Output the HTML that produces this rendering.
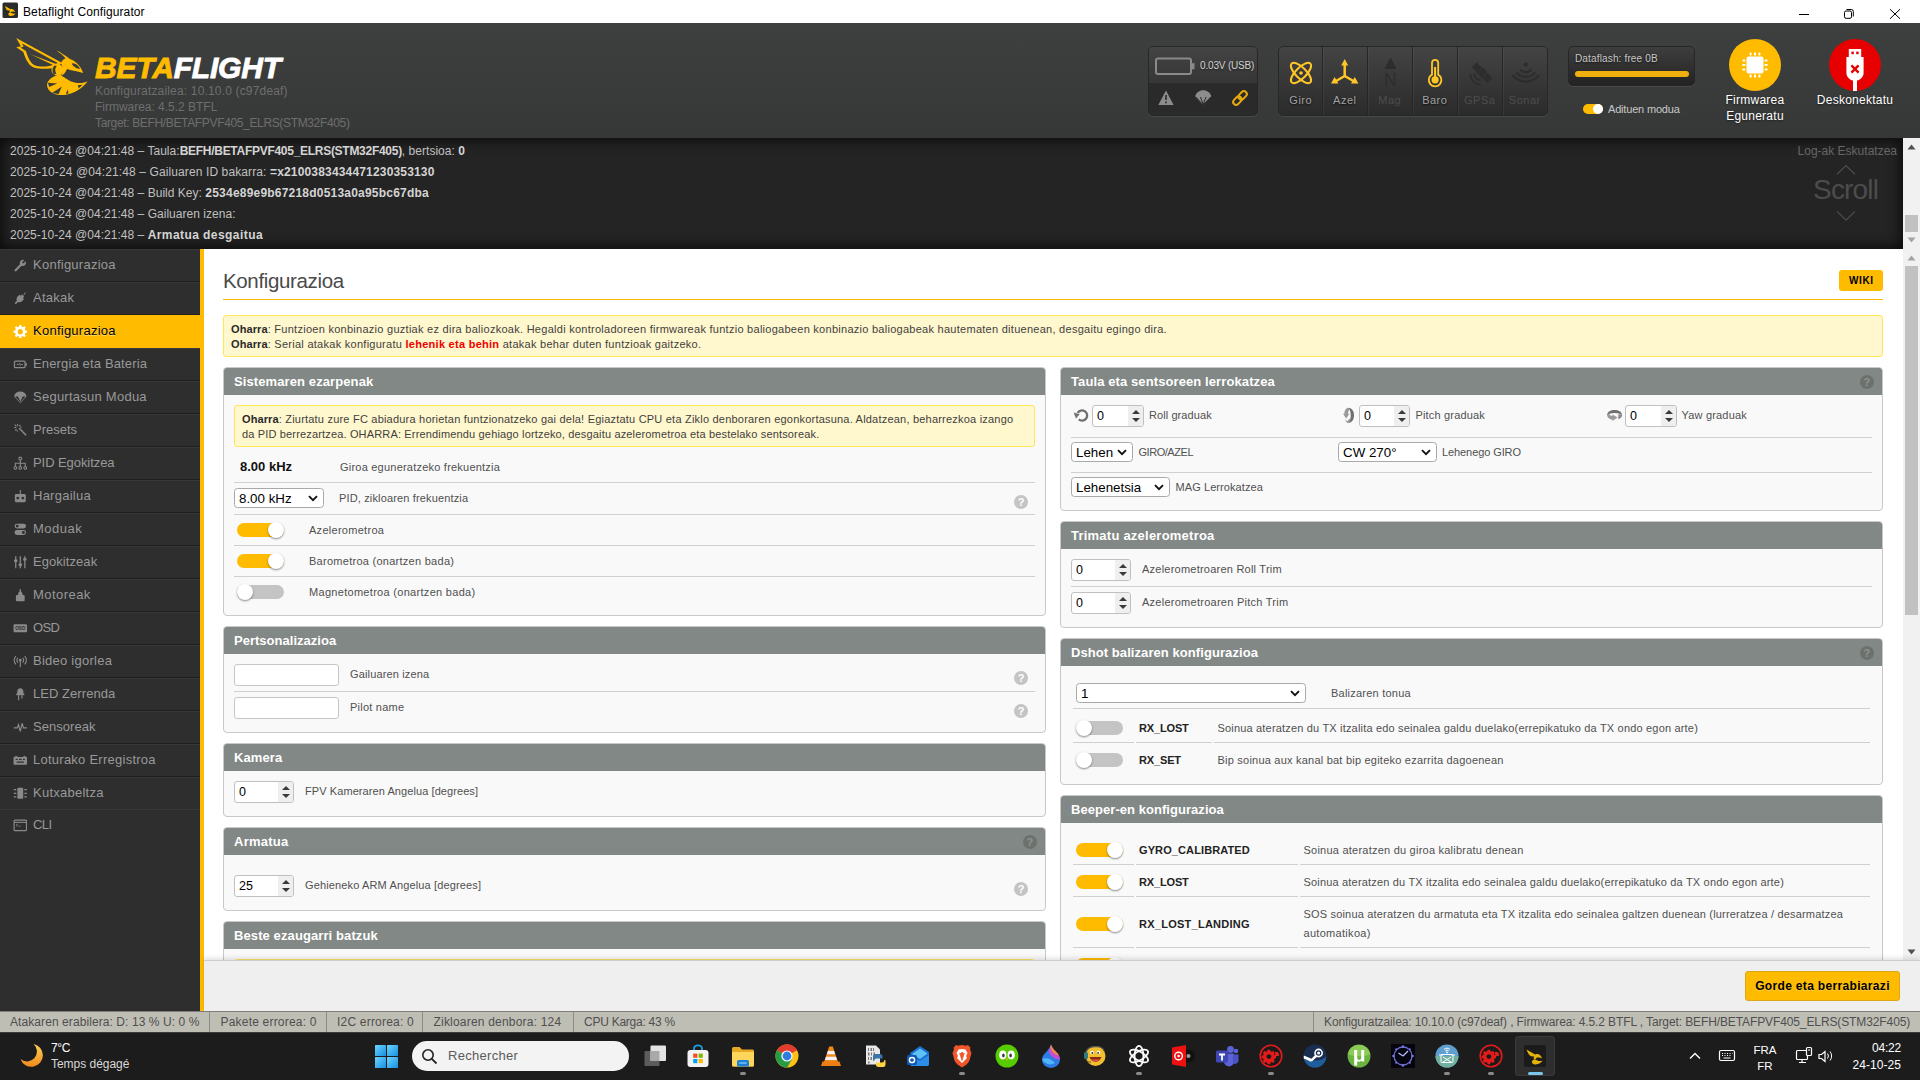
<!DOCTYPE html>
<html lang="eu">
<head>
<meta charset="utf-8">
<title>Betaflight Configurator</title>
<style>
*{box-sizing:border-box;margin:0;padding:0}
html,body{width:1920px;height:1080px;overflow:hidden;background:#fff}
body{font-family:"Liberation Sans",sans-serif;font-size:12px;color:#505050;position:relative}
.abs{position:absolute}
/* ---------- title bar ---------- */
#titlebar{left:0;top:0;width:1920px;height:23px;background:#fff}
#titlebar .ttl{left:23px;top:5px;font-size:12px;color:#000;line-height:15px;white-space:nowrap;letter-spacing:.1px}
/* ---------- header ---------- */
#header{left:0;top:23px;width:1920px;height:115px;background:linear-gradient(#3e403f,#363837);}
.ver{left:95px;color:#6e6e6e;font-size:12px;line-height:16px;white-space:nowrap;letter-spacing:.17px}
#logotext{left:95px;top:28px;font-size:30px;font-weight:bold;font-style:italic;line-height:34px;color:#fff;white-space:nowrap;letter-spacing:-.2px;transform-origin:0 50%}
#logotext{-webkit-text-stroke:.9px #fff;paint-order:stroke fill}
#logotext b{color:#ffbb00;-webkit-text-stroke:.9px #ffbb00}

/* header widgets */
.hbox{border-radius:5px;border:1px solid #272727;box-shadow:0 1px 0 rgba(255,255,255,.08)}
#bat{left:1148px;top:23px;width:110px;height:70px;background:#2a2a2a;overflow:hidden}
#bat .up{left:0;top:0;width:108px;height:36px;background:linear-gradient(#444,#363636)}
#bat .txt{left:51px;top:13px;font-size:10px;line-height:12px;color:#d0d0d0;white-space:nowrap;letter-spacing:-.17px;text-shadow:0 1px 2px rgba(0,0,0,.5)}
#sens{left:1278px;top:23px;width:270px;height:70px;background:linear-gradient(#444,#2b2b2b);overflow:hidden}
#sens .c{top:0;width:45px;height:68px}
#sens .c i{position:absolute;left:-1px;top:0;width:1px;height:68px;background:#262626;box-shadow:1px 0 0 rgba(255,255,255,.05)}
#sens .c span{position:absolute;left:-1px;width:45px;top:46px;text-align:center;font-size:11px;line-height:14px;color:#a3a3a3;text-shadow:0 1px 2px rgba(0,0,0,.8);letter-spacing:.5px;text-indent:.5px}
#sens .c.off span{color:#4d4d4d;text-shadow:none}
#sens svg{position:absolute;left:0;top:0}
#dflash{left:1568px;top:23px;width:127px;height:40px;background:linear-gradient(#3e3e3e,#232323)}
#dflash .t{left:6px;top:6px;font-size:10px;line-height:12px;color:#c8c8c8;white-space:nowrap;letter-spacing:.15px;text-shadow:0 1px 2px rgba(0,0,0,.6)}
#dflash .bar{left:6px;top:24px;width:114px;height:6px;border-radius:3px;background:#f0b10f}
#expert{left:1583px;top:81px;width:20px;height:10px;border-radius:5px;background:#ffbb00}
#expert i{position:absolute;right:0;top:0;width:10px;height:10px;border-radius:5px;background:#fff}
#expertl{left:1608px;top:79px;font-size:11px;line-height:14px;color:#c8c8c8;white-space:nowrap;letter-spacing:-.18px}
.circ{top:16px;width:52px;height:52px;border-radius:26px}
.clab{color:#fff;font-size:12px;line-height:16px;text-align:center;white-space:nowrap;letter-spacing:.25px;text-shadow:0 1px 2px rgba(0,0,0,.5)}
/* ---------- log ---------- */
#log{left:0;top:138px;width:1903px;height:111px;background:#242424;box-shadow:inset 0 0 14px 2px rgba(0,0,0,.75)}
#log .ln{left:10px;color:#c0c0c0;font-size:12px;line-height:21px;white-space:nowrap;letter-spacing:.03px}
#log .ln b{color:#d4d4d4;letter-spacing:.1px}
/* ---------- sidebar ---------- */
#side{left:0;top:249px;width:200px;height:762px;background:#2e2e2e}
#side .it{left:0;width:200px;height:33px;border-top:1px solid #383838;border-bottom:1px solid #1f1f1f;color:#999;font-size:13px;line-height:29px;padding-left:33px;white-space:nowrap;letter-spacing:.25px}
#side .it.act{background:#ffbb00;color:#000;border-color:#ffbb00;text-shadow:0 1px 0 rgba(255,255,255,.45)}
#side .it svg{position:absolute;left:12.8px;top:7.6px;width:14.6px;height:14.6px}
#side .it:last-child{border-bottom-color:#2e2e2e}
#ybar{left:200px;top:249px;width:4px;height:762px;background:#ffbb00}
/* ---------- content ---------- */
#content{left:204px;top:249px;width:1699px;height:711px;background:#fff;overflow:hidden}
#toolbar{left:204px;top:960px;width:1716px;height:51px;background:#efefef;border-top:1px solid #cdcdcd;box-shadow:0 -2px 5px rgba(0,0,0,.12)}
#status{left:0;top:1011px;width:1920px;height:21px;background:#bfbeb5;border-top:1px solid #7d7d79;color:#4f4f4f;font-size:12px;line-height:20px;white-space:nowrap}
#taskbar{left:0;top:1032px;width:1920px;height:48px;background:#1c1c1c}

/* content internals (page coordinates via #pg wrapper) */
#pg{left:-204px;top:-249px;width:1920px;height:1080px}
.t12{font-size:11px;line-height:16px;color:#505050;white-space:nowrap;letter-spacing:.08px}
.box{border:1px solid #c8c8c8;border-radius:4px;background:#f9f9f9;overflow:hidden}
.box .hd{left:0;top:-1px;right:0;height:28px;background:#828885;color:#fff;font-weight:bold;font-size:13px;line-height:29px;padding-left:10px;white-space:nowrap;letter-spacing:.1px}
.note{background:#fff7cd;border:1px solid #ffe55c;border-radius:3px;font-size:11px;line-height:15px;color:#3f3f3f;padding:6px 7px 4px;white-space:nowrap;letter-spacing:.27px}
.note b{color:#2a2a2a;letter-spacing:.1px}
.note .red{color:#f00000;font-weight:bold}
.sep{height:1px;background:#d0d0d0}
.help{width:14px;height:14px;border-radius:7px;background:#c4c4c4;color:#fff;font-size:11px;font-weight:bold;line-height:14px;text-align:center}
.hd .help{background:#6c716e;color:#8f9491;top:8px!important;line-height:14px}
.inp{background:#fff;border:1px solid #c6c6c6;border-radius:3px;height:22px}
.num{background:#fff;border:1px solid #c0c0c0;border-radius:3px;height:22px;font-size:12.5px;color:#000;line-height:20px;padding-left:4px;overflow:hidden}
.num i{position:absolute;right:0;top:0;width:15px;height:20px;background:#efefef}
.num i:before,.num i:after{content:"";position:absolute;left:3.5px;border:4px solid transparent}
.num i:before{border-bottom:4.5px solid #3a3a3a;border-top-width:0;top:4px}
.num i:after{top:12px;border-top:4.5px solid #3a3a3a;border-bottom-width:0}
.sel{background:#fff;border:1px solid #a9a9a9;border-radius:3.5px;height:20px;font-size:13.33px;color:#000;line-height:19px;padding-left:4px;white-space:nowrap;overflow:hidden}
.sel svg{position:absolute;right:5px;top:6px}
.tg{width:47px;height:16px}
.tg u{position:absolute;left:0;top:1px;width:47px;height:14px;border-radius:7px;background:#c4c4c4}
.tg.on u{background:#ffbb00}
.tg s{position:absolute;left:0;top:0;width:16px;height:16px;border-radius:8px;background:#fff;box-shadow:0 1px 2px rgba(0,0,0,.45)}
.tg.on s{left:31px}
.bl{font-size:11px;font-weight:bold;color:#222;line-height:16px;white-space:nowrap;letter-spacing:-.15px}
/* scrollbars */
.sbar{left:1903px;width:17px;background:#f1f1f1}
.thumb{left:2px;width:13px;background:#c1c1c1}
</style>
</head>
<body>
<div id="titlebar" class="abs">
<svg class="abs" style="left:2px;top:2px" width="17" height="17" viewBox="0 0 17 17"><rect x="0.5" y="0.5" width="15.5" height="15.5" rx="1.5" fill="#2b2b2b"/><path d="M3,4 L9,7.6 L6.5,8.6 C4.5,8.6 3.8,6.5 3,4Z M8.6,7.2 C10.5,6.3 12.6,8 13,10 C11.6,9.4 10.4,9.6 9.6,9.4 C9.2,10.4 8.4,10.8 7.8,11 L7.4,8.4Z M8,10.6 C6,11 5.6,13.4 8.2,13.9 C10.6,14.1 12.6,12.8 13.6,11.4 C12,12 10.2,11.6 8,10.6Z" fill="#ffbb00"/></svg>
<div class="abs ttl">Betaflight Configurator</div>
<svg class="abs" style="left:1790px;top:0" width="130" height="23" viewBox="1790 0 130 23" fill="none" stroke="#000" stroke-width="1"><path d="M1799,14.5H1809"/><rect x="1844.5" y="11" width="7" height="7.3" rx="1.5"/><path d="M1846.5,9.5H1851.3a2,2 0 0 1 2,2V16.5"/><path d="M1890,9.2L1900,18.8M1900,9.2L1890,18.8"/></svg>
</div>
<div id="header" class="abs">
<svg class="abs" style="left:10px;top:7px" width="90" height="70" viewBox="10 30 90 70">
<g fill="#ffbb00">
<path fill-rule="evenodd" d="M16.2,38.1 L61.8,62.7 L59.2,65.3 L51.5,68.2 C46.3,69.0 39.2,69.0 34.6,67.7 C29.4,66.0 26.2,61.1 23.3,52.0 L16.2,47.2 L20.9,46.3 Z M22.0,43.6 L57.8,63.0 C55.7,63.8 51.5,65.6 48.9,66.0 C43.7,66.8 38.5,66.7 35.3,65.5 C30.7,63.4 28.1,57.9 25.9,50.9 L20.4,47.6 L23.6,46.8 Z"/>
<path d="M30.5,54.2 L56.2,64.0 L54.6,65.8 Z"/>
<path d="M56.3,50.6 C60.5,52.0 64.4,55.3 67.3,57.7 L65.7,58.5 C62.5,55.3 59.9,52.7 56.3,50.6 Z M58.9,52.4 C62.5,53.7 66.4,55.9 69.3,58.5 L68.0,59.0 C65.1,56.2 62.5,54.3 58.9,52.4 Z"/>
<path d="M60.9,63.7 C61.8,59.8 65.7,56.9 69.0,58.4 C74.8,60.5 81.0,65.3 83.2,73.1 C78.7,71.1 72.2,71.1 67.0,69.0 C65.7,72.1 63.8,74.7 61.2,75.7 C63.8,72.1 63.1,66.3 60.9,63.7 Z"/>
<path d="M57.6,64.3 C61.2,64.3 63.5,66.9 63.5,69.8 C63.5,73.1 61.2,75.7 57.6,75.7 C54.7,75.7 51.5,73.4 51.5,69.8 C51.5,66.9 54.1,64.3 57.6,64.3 Z"/>
<path d="M60.5,74.8 C55.4,75.4 48.9,77.9 47.1,83.8 C46.3,89.6 51.5,94.1 59.2,95.0 C68.3,95.8 80.0,91.6 87.8,81.2 C82.6,83.8 74.8,83.8 68.3,79.9 C65.1,77.9 62.5,76.3 61.2,75.4 Z"/>
</g>
<g fill="#3b3d3c">
<path d="M54.7,65.5 C52.1,67.3 51.8,71.8 53.9,74.7 L56.3,73.5 C54.8,71.5 54.8,68.2 56.7,66.0 Z"/>
<path d="M47.9,82.8 L57.3,83.5 L49.2,87.0 Z M52.1,93.0 L61.8,86.4 L58.7,94.1 Z M65.9,94.1 L67.7,89.5 L68.4,93.5 Z M77.7,85.2 L82.6,84.8 L78.8,88.3 Z"/>
<path d="M71.9,63.7 C74.1,62.4 78.0,65.0 80.3,68.9 C77.4,68.9 73.2,66.9 71.9,63.7 Z"/>
</g>
</svg>
<div id="logotext" class="abs"><b>BETA</b>FLIGHT</div>
<div class="abs ver" style="top:60px">Konfiguratzailea: 10.10.0 (c97deaf)</div>
<div class="abs ver" style="top:76px;letter-spacing:-.02px">Firmwarea: 4.5.2 BTFL</div>
<div class="abs ver" style="top:92px;letter-spacing:-.35px">Target: BEFH/BETAFPVF405_ELRS(STM32F405)</div>
<div id="bat" class="abs hbox"><div class="abs up"></div>
<svg class="abs" style="left:0;top:0" width="108" height="68" viewBox="1149 47 108 68"><rect x="1156" y="58.5" width="35" height="15.5" rx="2" fill="none" stroke="#8a8a8a" stroke-width="2"/><rect x="1192" y="63" width="2.5" height="6.5" rx="1" fill="#8a8a8a"/>
<path d="M1166,90.6 L1173.6,105 H1158.3Z" fill="#8c8c8c"/><path d="M1166,95v5M1166,101.6v1.6" stroke="#2a2a2a" stroke-width="1.6"/>
<path d="M1195,96.5 C1196,92.5 1199.5,90.2 1203.2,90.2 C1207,90.2 1210.4,92.5 1211.4,96.5 L1203.2,105.3Z" fill="#8c8c8c"/><path d="M1195.5,96.6 L1203.2,105 L1211,96.6 M1200.5,97 L1203.2,104.5 L1206,97" fill="none" stroke="#2a2a2a" stroke-width="1"/>
<g fill="none" stroke="#e5ab0e" stroke-width="2" transform="translate(1240,98) rotate(-45)"><rect x="-8.4" y="-2.9" width="9.4" height="5.8" rx="2.9"/><rect x="-1" y="-2.9" width="9.4" height="5.8" rx="2.9"/></g>
</svg>
<div class="abs txt">0.03V (USB)</div></div>
<div id="sens" class="abs hbox">
<div class="abs c" style="left:0px"><svg width="45" height="68" viewBox="1279 47 45 68"><g fill="none" stroke="#ffc726" stroke-width="2"><ellipse cx="1301" cy="73" rx="13.3" ry="5.3" transform="rotate(45 1301 73)"/><ellipse cx="1301" cy="73" rx="13.3" ry="5.3" transform="rotate(-45 1301 73)"/></g><circle cx="1301" cy="73" r="1.8" fill="#ffc726"/></svg><span>Giro</span></div>
<div class="abs c" style="left:44px"><i></i><svg width="45" height="68" viewBox="1323 47 45 68"><g stroke="#ffc726" stroke-width="2.5" fill="none"><path d="M1344.7,76 V64 M1344.7,76 L1336,81 M1344.7,76 L1353.4,81"/></g><path d="M1344.7,59 L1348.2,65.5 H1341.2Z M1331,83.6 L1334.6,77 L1338.4,83.4Z M1358.4,83.6 L1354.8,77 L1351,83.4Z" fill="#ffc726"/></svg><span>Azel</span></div>
<div class="abs c off" style="left:89px"><i></i><svg width="45" height="68" viewBox="1368 47 45 68"><path d="M1390.5,57.2 L1396.6,69 H1384.4Z" fill="#2d2d2d"/><text x="1390.5" y="86.3" font-size="17.8" text-anchor="middle" fill="#2d2d2d" font-family="Liberation Sans,sans-serif">N</text></svg><span>Mag</span></div>
<div class="abs c" style="left:134px"><i></i><svg width="45" height="68" viewBox="1413 47 45 68"><path d="M1432,74.6 V63 a3.1,3.1 0 0 1 6.2,0 V74.6 a6.3,6.3 0 1 1 -6.2,0Z" fill="none" stroke="#ffc726" stroke-width="1.8"/><circle cx="1435.1" cy="79.8" r="3.6" fill="#ffc726"/><path d="M1435.1,78 V67" stroke="#ffc726" stroke-width="2"/></svg><span>Baro</span></div>
<div class="abs c off" style="left:179px"><i></i><svg width="45" height="68" viewBox="1458 47 45 68"><g fill="#2d2d2d"><rect x="-3.4" y="-11" width="6.8" height="7.2" transform="translate(1482,72.5) rotate(-45)"/><rect x="-3.4" y="4" width="6.8" height="7.2" transform="translate(1482,72.5) rotate(-45)"/><rect x="-4" y="-3.3" width="8" height="6.6" transform="translate(1482,72.5) rotate(-45)"/></g><g fill="none" stroke="#2d2d2d" stroke-width="2"><path d="M1474.3,73.5 a6,6 0 0 0 6.5,6.5"/><path d="M1470.5,74 a10,10 0 0 0 10.5,10.5"/></g></svg><span>GPSa</span></div>
<div class="abs c off" style="left:224px"><i></i><svg width="45" height="68" viewBox="1503 47 45 68"><circle cx="1525.8" cy="64.6" r="2.1" fill="#2d2d2d"/><g fill="none" stroke="#2d2d2d" stroke-width="2.2"><path d="M1520.3,69.5 a7,7 0 0 0 11,0"/><path d="M1516.3,72.3 a12,12 0 0 0 19,0"/><path d="M1512.6,75 a16.5,16.5 0 0 0 26.4,0"/></g></svg><span>Sonar</span></div>
</div>
<div id="dflash" class="abs hbox"><div class="abs t">Dataflash: free 0B</div><div class="abs bar"></div></div>
<div id="expert" class="abs"><i></i></div><div id="expertl" class="abs">Adituen modua</div>
<div class="abs circ" style="left:1729px;background:#ffbb00"><svg width="52" height="52" viewBox="-26 -26 52 52"><rect x="-8.5" y="-8.5" width="17" height="17" rx="2" fill="#fff"/><g fill="#fff"><rect x="-5.4" y="-12.6" width="2" height="3" rx=".6"/><rect x="-1" y="-12.6" width="2" height="3" rx=".6"/><rect x="3.4" y="-12.6" width="2" height="3" rx=".6"/><rect x="-5.4" y="9.6" width="2" height="3" rx=".6"/><rect x="-1" y="9.6" width="2" height="3" rx=".6"/><rect x="3.4" y="9.6" width="2" height="3" rx=".6"/><rect x="-12.6" y="-5.4" width="3" height="2" rx=".6"/><rect x="-12.6" y="-1" width="3" height="2" rx=".6"/><rect x="-12.6" y="3.4" width="3" height="2" rx=".6"/><rect x="9.6" y="-5.4" width="3" height="2" rx=".6"/><rect x="9.6" y="-1" width="3" height="2" rx=".6"/><rect x="9.6" y="3.4" width="3" height="2" rx=".6"/></g></svg></div>
<div class="abs clab" style="left:1705px;width:100px;top:69px">Firmwarea<br>Eguneratu</div>
<div class="abs circ" style="left:1829px;background:#e60000"><svg width="52" height="52" viewBox="-26 -26 52 52"><path d="M-6.2,-16 H6.2 V-8 H-6.2Z M-8.6,-8 H8.6 V8 C8.6,12 5,15 2,15.6 V26 H-2 V15.6 C-5,15 -8.6,12 -8.6,8Z" fill="#fff"/><rect x="-3.6" y="-13.4" width="2.4" height="2.6" fill="#e60000"/><rect x="1.2" y="-13.4" width="2.4" height="2.6" fill="#e60000"/><path d="M-3.6,0.4 L3.6,7.6 M3.6,0.4 L-3.6,7.6" stroke="#e60000" stroke-width="2.4"/></svg></div>
<div class="abs clab" style="left:1805px;width:100px;top:69px">Deskonektatu</div>

</div>
<div id="log" class="abs">
<div class="abs ln" style="top:3px">2025-10-24 @04:21:48 – Taula:<b style="letter-spacing:-.28px">BEFH/BETAFPVF405_ELRS(STM32F405)</b>, bertsioa: <b>0</b></div>
<div class="abs ln" style="top:24px;letter-spacing:.11px">2025-10-24 @04:21:48 – Gailuaren ID bakarra: <b style="letter-spacing:.17px">=x2100383434471230353130</b></div>
<div class="abs ln" style="top:45px">2025-10-24 @04:21:48 – Build Key: <b style="letter-spacing:.21px">2534e89e9b67218d0513a0a95bc67dba</b></div>
<div class="abs ln" style="top:66px">2025-10-24 @04:21:48 – Gailuaren izena: </div>
<div class="abs ln" style="top:87px">2025-10-24 @04:21:48 – <b style="letter-spacing:.43px">Armatua desgaitua</b></div>
<div class="abs" style="right:6px;top:5px;font-size:12px;line-height:16px;color:#666;white-space:nowrap;letter-spacing:0">Log-ak Eskutatzea</div>
<div class="abs" style="left:1813px;top:32px;font-size:28px;line-height:40px;color:#4c4c4c;white-space:nowrap;letter-spacing:-.8px" id="scrolltxt">Scroll</div>
<svg class="abs" style="left:1830px;top:22px" width="32" height="66" viewBox="1830 160 32 66" fill="none" stroke="#4c4c4c" stroke-width="1.3"><path d="M1837,174.3 L1846,165.6 L1855,174.3"/><path d="M1837,211.4 L1846,220.2 L1855,211.4"/></svg>
</div>
<div class="abs sbar" style="top:138px;height:111px"><div class="abs thumb" style="top:77px;height:17px"></div>
<svg class="abs" style="left:0;top:0" width="17" height="111" viewBox="0 0 17 111"><path d="M4.5,11.5 L8.5,6.5 L12.5,11.5Z" fill="#505050"/><path d="M4.5,99.5 L8.5,104.5 L12.5,99.5Z" fill="#a3a3a3"/></svg></div>
<div id="side" class="abs">
<div class="abs it" style="top:0px"><svg viewBox="0 0 16 16" fill="#8a8a8a" color="#8a8a8a"><path d="M13.8,3.6 L11.6,5.8 L10.2,5.8 L10.2,4.4 L12.4,2.2 C10.9,1.6 9.2,2 8.2,3.2 C7.3,4.3 7.2,5.7 7.7,6.9 L2,12.6 C1.5,13.1 1.5,13.9 2,14.3 C2.5,14.8 3.2,14.8 3.7,14.3 L9.4,8.6 C10.6,9.1 12,8.9 13,8 C14.1,6.9 14.5,5.1 13.8,3.6Z"/></svg>Konfigurazioa</div>
<div class="abs it" style="top:33px"><svg viewBox="0 0 16 16" fill="#8a8a8a" color="#8a8a8a"><path d="M14.2,2 L11.2,5 L12.3,6.1 L10.9,7.5 L12,8.6 C10.6,11.4 8,12.6 5.4,11.8 L3.2,14.4 L1.8,13 L4.2,10.6 C3.2,8 4.6,5.4 7.4,4 L8.5,5.1 L9.9,3.7 L11,4.8 L13.2,1.2Z" transform="translate(0,0.2)"/></svg>Atakak</div>
<div class="abs it act" style="top:66px"><svg viewBox="0 0 16 16" fill="#fff" color="#fff"><path d="M6.9,1 H9.1 L9.5,3 L10.8,3.6 L12.5,2.4 L14,3.9 L12.9,5.6 L13.4,6.9 L15.4,7.3 V9.5 L13.4,9.9 L12.9,11.2 L14,12.9 L12.5,14.4 L10.8,13.2 L9.5,13.8 L9.1,15.8 H6.9 L6.5,13.8 L5.2,13.2 L3.5,14.4 L2,12.9 L3.1,11.2 L2.6,9.9 L0.6,9.5 V7.3 L2.6,6.9 L3.1,5.6 L2,3.9 L3.5,2.4 L5.2,3.6 L6.5,3Z M8,5.6 A2.8,2.8 0 1 0 8,11.2 A2.8,2.8 0 1 0 8,5.6Z" fill-rule="evenodd"/></svg>Konfigurazioa</div>
<div class="abs it" style="top:99px;letter-spacing:0.15px"><svg viewBox="0 0 16 16" fill="#8a8a8a" color="#8a8a8a"><rect x="1.6" y="4.6" width="11.6" height="7" rx="1" fill="none" stroke="currentColor" stroke-width="1.4"/><rect x="13.8" y="6.6" width="1.4" height="3"/><path d="M4,8.2 H6.4 L7.2,6.8 L8.2,9.4 L9,8.2 H11" fill="none" stroke="currentColor" stroke-width="1"/></svg>Energia eta Bateria</div>
<div class="abs it" style="top:132px"><svg viewBox="0 0 16 16" fill="#8a8a8a" color="#8a8a8a"><path d="M1.2,7 C1.8,3.6 4.6,1.6 8,1.6 C11.4,1.6 14.2,3.6 14.8,7 L8,14.6Z M2.2,7.2 L8,13.6 L13.8,7.2 L10.6,7.2 L8,13 L5.4,7.2Z" fill-rule="evenodd"/></svg>Segurtasun Modua</div>
<div class="abs it" style="top:165px;letter-spacing:0px"><svg viewBox="0 0 16 16" fill="#8a8a8a" color="#8a8a8a"><path d="M6.2,6.4 L7.4,5.2 L15,12.8 L13.8,14Z"/><path d="M4.8,1 L5.4,3.4 M1.2,4.6 L3.6,5.2 M2,1.8 L3.8,3.6 M8,2 L6.8,3.6 M2.2,8 L3.8,6.8 M4.4,7.6 L4.8,9.4 M7.6,4.4 L9.4,4.6" fill="none" stroke="currentColor" stroke-width="1.1"/></svg>Presets</div>
<div class="abs it" style="top:198px;letter-spacing:-0.07px"><svg viewBox="0 0 16 16" fill="#8a8a8a" color="#8a8a8a"><g fill="none" stroke="currentColor" stroke-width="1.2"><circle cx="8" cy="2.8" r="1.6"/><circle cx="2.6" cy="13" r="1.5"/><circle cx="8" cy="13" r="1.5"/><circle cx="13.4" cy="13" r="1.5"/><path d="M8,4.4 V11.5 M2.6,11.5 V8 H13.4 V11.5"/></g></svg>PID Egokitzea</div>
<div class="abs it" style="top:231px"><svg viewBox="0 0 16 16" fill="#8a8a8a" color="#8a8a8a"><path d="M7.4,1 H8.6 V5.4 H12.4 C13.4,5.4 14,6 14,7 V13 C14,14 13.4,14.6 12.4,14.6 H3.6 C2.6,14.6 2,14 2,13 V7 C2,6 2.6,5.4 3.6,5.4 H7.4Z M5.2,8.4 A1.5,1.5 0 1 0 5.2,11.4 A1.5,1.5 0 1 0 5.2,8.4Z M10.8,8.4 A1.5,1.5 0 1 0 10.8,11.4 A1.5,1.5 0 1 0 10.8,8.4Z" fill-rule="evenodd"/></svg>Hargailua</div>
<div class="abs it" style="top:264px;letter-spacing:0.48px"><svg viewBox="0 0 16 16" fill="#8a8a8a" color="#8a8a8a"><path d="M4.4,1.8 H11.6 A2.7,2.7 0 0 1 11.6,7.2 H4.4 A2.7,2.7 0 0 1 4.4,1.8Z M4.6,2.9 A1.6,1.6 0 1 0 4.6,6.1 A1.6,1.6 0 1 0 4.6,2.9Z M4.4,8.8 H11.6 A2.7,2.7 0 0 1 11.6,14.2 H4.4 A2.7,2.7 0 0 1 4.4,8.8Z M11.4,9.9 A1.6,1.6 0 1 0 11.4,13.1 A1.6,1.6 0 1 0 11.4,9.9Z" fill-rule="evenodd"/></svg>Moduak</div>
<div class="abs it" style="top:297px;letter-spacing:0.06px"><svg viewBox="0 0 16 16" fill="#8a8a8a" color="#8a8a8a"><g fill="none" stroke="currentColor" stroke-width="1.4"><path d="M3,1.4 V14.6 M8,1.4 V14.6 M13,1.4 V14.6"/></g><rect x="1.2" y="5" width="3.6" height="2.6"/><rect x="6.2" y="9.4" width="3.6" height="2.6"/><rect x="11.2" y="3.4" width="3.6" height="2.6"/></svg>Egokitzeak</div>
<div class="abs it" style="top:330px;letter-spacing:0.45px"><svg viewBox="0 0 16 16" fill="#8a8a8a" color="#8a8a8a"><path d="M7.2,1.4 H8.8 V4.2 C9.8,4.6 10.4,5.6 10.4,6.6 V7.8 H11.6 C12.4,7.8 12.8,8.2 12.8,9 V13.4 C12.8,14.2 12.4,14.6 11.6,14.6 H4.4 C3.6,14.6 3.2,14.2 3.2,13.4 V9 C3.2,8.2 3.6,7.8 4.4,7.8 H5.6 V6.6 C5.6,5.6 6.2,4.6 7.2,4.2Z"/></svg>Motoreak</div>
<div class="abs it" style="top:363px;letter-spacing:-0.65px"><svg viewBox="0 0 16 16" fill="#8a8a8a" color="#8a8a8a"><path d="M2,3.6 H14 C14.8,3.6 15.4,4.2 15.4,5 V11 C15.4,11.8 14.8,12.4 14,12.4 H2 C1.2,12.4 0.6,11.8 0.6,11 V5 C0.6,4.2 1.2,3.6 2,3.6Z"/><text x="8" y="10" font-size="5.2" font-weight="bold" text-anchor="middle" fill="#2e2e2e" font-family="Liberation Sans,sans-serif" style="letter-spacing:0">OSD</text></svg>OSD</div>
<div class="abs it" style="top:396px"><svg viewBox="0 0 16 16" fill="#8a8a8a" color="#8a8a8a"><g fill="none" stroke="currentColor" stroke-width="1.2"><path d="M8,6.8 V14.6"/><path d="M5.4,4.2 A3.6,3.6 0 0 0 5.4,9.4 M10.6,4.2 A3.6,3.6 0 0 1 10.6,9.4 M3.2,2.2 A6.6,6.6 0 0 0 3.2,11.4 M12.8,2.2 A6.6,6.6 0 0 1 12.8,11.4"/></g><circle cx="8" cy="6.8" r="1.5"/></svg>Bideo igorlea</div>
<div class="abs it" style="top:429px;letter-spacing:0.05px"><svg viewBox="0 0 16 16" fill="#8a8a8a" color="#8a8a8a"><path d="M4.6,7 V5 C4.6,2.8 6,1.4 8,1.4 C10,1.4 11.4,2.8 11.4,5 V7 H12.4 V9 H3.6 V7Z"/><path d="M6.2,9 V14.6 M9.8,9 V12.6" fill="none" stroke="currentColor" stroke-width="1.3"/></svg>LED Zerrenda</div>
<div class="abs it" style="top:462px;letter-spacing:0.05px"><svg viewBox="0 0 16 16" fill="#8a8a8a" color="#8a8a8a"><path d="M0.8,8.6 H4.6 L6,5 L8,12.4 L10,3.6 L11.4,8.6 H15.2" fill="none" stroke="currentColor" stroke-width="1.3"/></svg>Sensoreak</div>
<div class="abs it" style="top:495px"><svg viewBox="0 0 16 16" fill="#8a8a8a" color="#8a8a8a"><path d="M1.4,4.4 L3.4,3 L5.4,4.4 H10.6 L12.6,3 L14.6,4.4 C15.2,4.4 15.4,4.8 15.4,5.2 V12 C15.4,12.6 15,12.8 14.6,12.8 H1.4 C0.8,12.8 0.6,12.4 0.6,12 V5.2 C0.6,4.8 0.8,4.4 1.4,4.4Z"/><path d="M3,7 H5 M6.6,7 H9.4 M11,7 H13 M4,10 H12" stroke="#2e2e2e" stroke-width="1.4" fill="none"/></svg>Loturako Erregistroa</div>
<div class="abs it" style="top:528px"><svg viewBox="0 0 16 16" fill="#8a8a8a" color="#8a8a8a"><rect x="4.8" y="2" width="6.4" height="12" rx="1"/><path d="M0.8,4 H3.6 M0.8,8 H3.6 M0.8,12 H3.6 M12.4,4 H15.2 M12.4,8 H15.2 M12.4,12 H15.2" stroke="currentColor" stroke-width="1.3" fill="none"/></svg>Kutxabeltza</div>
<div class="abs it" style="top:560px;letter-spacing:-0.6px"><svg viewBox="0 0 16 16" fill="#8a8a8a" color="#8a8a8a"><rect x="1.2" y="2.4" width="13.6" height="11.4" rx="1" fill="none" stroke="currentColor" stroke-width="1.3"/><path d="M1.2,4.8 H14.8" stroke="currentColor" stroke-width="1.2"/><path d="M3.4,6.6 L5.2,7.8 L3.4,9 M6.2,9 H8.4" fill="none" stroke="currentColor" stroke-width=".9"/></svg>CLI</div>
</div>
<div id="ybar" class="abs"></div>
<div id="content" class="abs"><div id="pg" class="abs">
<div class="abs" id="ctitle" style="left:223px;top:268px;font-size:20.5px;line-height:26px;color:#4a4a4a;white-space:nowrap;letter-spacing:-.35px">Konfigurazioa</div>
<div class="abs" style="left:223px;top:299px;width:1660px;height:1px;background:#ffbb00"></div>
<div class="abs" style="left:1839px;top:270px;width:44px;height:21px;border-radius:3px;background:#ffbb00;color:#000;font-size:10px;font-weight:bold;line-height:21px;text-align:center;letter-spacing:.6px;text-indent:.6px">WIKI</div>
<div class="abs note" style="left:223px;top:315px;width:1660px;height:42px"><b>Oharra</b>: Funtzioen konbinazio guztiak ez dira baliozkoak. Hegaldi kontroladoreen firmwareak funtzio baliogabeen konbinazio baliogabeak hautematen dituenean, desgaitu egingo dira.<br><b>Oharra</b>: Serial atakak konfiguratu <span class="red">lehenik eta behin</span> atakak behar duten funtzioak gaitzeko.</div>
<div class="abs box" style="left:223px;top:367px;width:823px;height:249px"><div class="abs" style="left:-224px;top:-368px"><div class="abs note" style="left:234px;top:405px;width:801px;height:42px"><span style="letter-spacing:.21px"><b>Oharra</b>: Ziurtatu zure FC abiadura horietan funtzionatzeko gai dela! Egiaztatu CPU eta Ziklo denboraren egonkortasuna. Aldatzean, beharrezkoa izango</span><br><span style="letter-spacing:.16px">da PID berrezartzea. OHARRA: Errendimendu gehiago lortzeko, desgaitu azelerometroa eta bestelako sentsoreak.</span></div><div class="abs" style="left:240px;top:459px;font-size:13px;font-weight:bold;color:#111;line-height:16px;white-space:nowrap">8.00 kHz</div><div class="abs t12" style="left:340px;top:459px;letter-spacing:0.22px">Giroa eguneratzeko frekuentzia</div><div class="abs sep" style="left:234px;top:482px;width:801px"></div><div class="abs sel" style="left:234px;top:488px;width:90px">8.00 kHz<svg width="10" height="7" viewBox="0 0 10 7"><path d="M1,1.2 L5,5.2 L9,1.2" fill="none" stroke="#111" stroke-width="1.9"/></svg></div><div class="abs t12" style="left:339px;top:490px;letter-spacing:0.15px">PID, zikloaren frekuentzia</div><div class="abs help" style="left:1014px;top:495px">?</div><div class="abs sep" style="left:234px;top:514px;width:801px"></div><div class="abs tg on" style="left:237px;top:522px"><u></u><s></s></div><div class="abs t12" style="left:309px;top:522px;letter-spacing:0.28px">Azelerometroa</div><div class="abs sep" style="left:234px;top:545px;width:801px"></div><div class="abs tg on" style="left:237px;top:553px"><u></u><s></s></div><div class="abs t12" style="left:309px;top:553px;letter-spacing:0.27px">Barometroa (onartzen bada)</div><div class="abs sep" style="left:234px;top:576px;width:801px"></div><div class="abs tg" style="left:237px;top:584px"><u></u><s></s></div><div class="abs t12" style="left:309px;top:584px;letter-spacing:0.3px">Magnetometroa (onartzen bada)</div></div><div class="abs hd">Sistemaren ezarpenak</div></div>
<div class="abs box" style="left:223px;top:626px;width:823px;height:107px"><div class="abs" style="left:-224px;top:-627px"><div class="abs inp" style="left:234px;top:664px;width:105px"></div><div class="abs t12" style="left:350px;top:666px;letter-spacing:0.15px">Gailuaren izena</div><div class="abs help" style="left:1014px;top:671px">?</div><div class="abs sep" style="left:234px;top:691px;width:801px"></div><div class="abs inp" style="left:234px;top:697px;width:105px"></div><div class="abs t12" style="left:350px;top:699px;letter-spacing:0.23px">Pilot name</div><div class="abs help" style="left:1014px;top:704px">?</div></div><div class="abs hd" style="letter-spacing:0.02px">Pertsonalizazioa</div></div>
<div class="abs box" style="left:223px;top:743px;width:823px;height:74px"><div class="abs" style="left:-224px;top:-744px"><div class="abs num" style="left:234px;top:781px;width:60px">0<i></i></div><div class="abs t12" style="left:305px;top:783px;letter-spacing:0.08px">FPV Kameraren Angelua [degrees]</div></div><div class="abs hd">Kamera</div></div>
<div class="abs box" style="left:223px;top:827px;width:823px;height:84px"><div class="abs" style="left:-224px;top:-828px"><div class="abs num" style="left:234px;top:875px;width:60px">25<i></i></div><div class="abs t12" style="left:305px;top:877px;letter-spacing:0.14px">Gehieneko ARM Angelua [degrees]</div><div class="abs help" style="left:1014px;top:882px">?</div></div><div class="abs hd" style="letter-spacing:0.25px">Armatua<div class="abs help" style="right:8px;top:6px">?</div></div></div>
<div class="abs box" style="left:223px;top:921px;width:823px;height:121px"><div class="abs" style="left:-224px;top:-922px"><div class="abs note" style="left:234px;top:959px;width:801px;height:42px"></div></div><div class="abs hd">Beste ezaugarri batzuk</div></div>
<div class="abs box" style="left:1060px;top:367px;width:823px;height:144px"><div class="abs" style="left:-1061px;top:-368px"><svg class="abs" style="left:1070px;top:405px" width="20" height="20" viewBox="1070 405 20 20"><path d="M1077.6,413 A5.1,5.1 0 1 1 1078.8,419.4" fill="none" stroke="#707070" stroke-width="2.3"/><path d="M1073.6,412.6 L1079.6,414.2 L1076,418.4Z" fill="#707070"/></svg><div class="abs num" style="left:1092px;top:405px;width:52px">0<i></i></div><div class="abs t12" style="left:1149px;top:407px;letter-spacing:.08px">Roll graduak</div><svg class="abs" style="left:1340px;top:405px" width="20" height="20" viewBox="1340 405 20 20"><path d="M1348.3,407.8 C1356,407.8 1356,423 1348.3,423 C1351.6,420 1351.6,411 1348.3,407.8Z" fill="#707070"/><path d="M1348.5,407.8 C1345.2,408.2 1344.4,411.8 1344.4,413.8 L1343,413.8 L1346.2,418.6 L1349.4,413.8 L1348,413.8 C1348,412 1348.6,410.2 1350,409.2Z M1345,419.4 C1346,422 1347.4,423 1348.4,423 C1350.4,421.2 1350.4,419.2 1350.3,418 L1347.2,421.2Z" fill="#9a9a9a"/></svg><div class="abs num" style="left:1359px;top:405px;width:51px">0<i></i></div><div class="abs t12" style="left:1415.5px;top:407px;letter-spacing:.17px">Pitch graduak</div><svg class="abs" style="left:1604px;top:405px" width="20" height="20" viewBox="1604 405 20 20"><path d="M1607.1,415.2 C1607.1,408.2 1622.1,408.2 1622.1,415.2 C1619,412.4 1610.2,412.4 1607.1,415.2Z" fill="#707070"/><path d="M1618.4,414 L1622.1,415 C1622.1,417 1620.6,418.6 1618.2,419.2Z" fill="#8a8a8a"/><path d="M1607.1,415 C1607.4,418 1610,419.3 1612.4,419.6 L1612.4,421 L1617.6,417.6 L1612.4,414.4 L1612.4,416 C1610.4,415.8 1609.4,415 1609.4,413.8Z" fill="#9a9a9a"/></svg><div class="abs num" style="left:1625px;top:405px;width:52px">0<i></i></div><div class="abs t12" style="left:1681.5px;top:407px;letter-spacing:0.19px">Yaw graduak</div><div class="abs sep" style="left:1071px;top:437px;width:801px"></div><div class="abs sel" style="left:1071px;top:442px;width:62px">Lehen<svg width="10" height="7" viewBox="0 0 10 7"><path d="M1,1.2 L5,5.2 L9,1.2" fill="none" stroke="#111" stroke-width="1.9"/></svg></div><div class="abs t12" style="left:1138.5px;top:444px;letter-spacing:-0.46px">GIRO/AZEL</div><div class="abs sel" style="left:1338px;top:442px;width:99px">CW 270°<svg width="10" height="7" viewBox="0 0 10 7"><path d="M1,1.2 L5,5.2 L9,1.2" fill="none" stroke="#111" stroke-width="1.9"/></svg></div><div class="abs t12" style="left:1442px;top:444px;letter-spacing:-0.09px">Lehenego GIRO</div><div class="abs sep" style="left:1071px;top:472px;width:801px"></div><div class="abs sel" style="left:1071px;top:477px;width:99px">Lehenetsia<svg width="10" height="7" viewBox="0 0 10 7"><path d="M1,1.2 L5,5.2 L9,1.2" fill="none" stroke="#111" stroke-width="1.9"/></svg></div><div class="abs t12" style="left:1175.5px;top:479px;letter-spacing:0.08px">MAG Lerrokatzea</div></div><div class="abs hd">Taula eta sentsoreen lerrokatzea<div class="abs help" style="right:8px;top:6px">?</div></div></div>
<div class="abs box" style="left:1060px;top:521px;width:823px;height:107px"><div class="abs" style="left:-1061px;top:-522px"><div class="abs num" style="left:1071px;top:559px;width:60px">0<i></i></div><div class="abs t12" style="left:1142px;top:561px;letter-spacing:0.23px">Azelerometroaren Roll Trim</div><div class="abs sep" style="left:1071px;top:586px;width:801px"></div><div class="abs num" style="left:1071px;top:592px;width:60px">0<i></i></div><div class="abs t12" style="left:1142px;top:594px;letter-spacing:0.26px">Azelerometroaren Pitch Trim</div></div><div class="abs hd" style="letter-spacing:0.23px">Trimatu azelerometroa</div></div>
<div class="abs box" style="left:1060px;top:638px;width:823px;height:147px"><div class="abs" style="left:-1061px;top:-639px"><div class="abs sel" style="left:1076px;top:683px;width:230px">1<svg width="10" height="7" viewBox="0 0 10 7"><path d="M1,1.2 L5,5.2 L9,1.2" fill="none" stroke="#111" stroke-width="1.9"/></svg></div><div class="abs t12" style="left:1331px;top:685px;letter-spacing:0.23px">Balizaren tonua</div><div class="abs sep" style="left:1073px;top:708px;width:797px"></div><div class="abs tg" style="left:1076px;top:720px"><u></u><s></s></div><div class="abs bl" style="left:1139px;top:720px">RX_LOST</div><div class="abs t12" style="left:1217.5px;top:719.5px;letter-spacing:0.18px">Soinua ateratzen du TX itzalita edo seinalea galdu duelako(errepikatuko da TX ondo egon arte)</div><div class="abs sep" style="left:1073px;top:742px;width:61px"></div><div class="abs sep" style="left:1136px;top:742px;width:76px"></div><div class="abs sep" style="left:1214px;top:742px;width:656px"></div><div class="abs tg" style="left:1076px;top:752px"><u></u><s></s></div><div class="abs bl" style="left:1139px;top:752px">RX_SET</div><div class="abs t12" style="left:1217.5px;top:751.5px;letter-spacing:0.22px">Bip soinua aux kanal bat bip egiteko ezarrita dagoenean</div></div><div class="abs hd" style="letter-spacing:0.07px">Dshot balizaren konfigurazioa<div class="abs help" style="right:8px;top:6px">?</div></div></div>
<div class="abs box" style="left:1060px;top:795px;width:823px;height:301px"><div class="abs" style="left:-1061px;top:-796px"><div class="abs tg on" style="left:1076px;top:842px"><u></u><s></s></div><div class="abs bl" style="left:1139px;top:842px;letter-spacing:0.11px">GYRO_CALIBRATED</div><div class="abs t12" style="left:1303.5px;top:841.5px;letter-spacing:0.23px">Soinua ateratzen du giroa kalibratu denean</div><div class="abs sep" style="left:1073px;top:864px;width:61px"></div><div class="abs sep" style="left:1136px;top:864px;width:162px"></div><div class="abs sep" style="left:1300px;top:864px;width:570px"></div><div class="abs tg on" style="left:1076px;top:874px"><u></u><s></s></div><div class="abs bl" style="left:1139px;top:874px">RX_LOST</div><div class="abs t12" style="left:1303.5px;top:873.5px;letter-spacing:0.18px">Soinua ateratzen du TX itzalita edo seinalea galdu duelako(errepikatuko da TX ondo egon arte)</div><div class="abs sep" style="left:1073px;top:896px;width:61px"></div><div class="abs sep" style="left:1136px;top:896px;width:162px"></div><div class="abs sep" style="left:1300px;top:896px;width:570px"></div><div class="abs tg on" style="left:1076px;top:915.5px"><u></u><s></s></div><div class="abs bl" style="left:1139px;top:915.5px;letter-spacing:0.26px">RX_LOST_LANDING</div><div class="abs t12" style="left:1303.5px;top:905px;line-height:19px;letter-spacing:0.18px">SOS soinua ateratzen du armatuta eta TX itzalita edo seinalea galtzen duenean (lurreratzea / desarmatzea</div><div class="abs t12" style="left:1303.5px;top:924.2px;line-height:19px;letter-spacing:0.3px">automatikoa)</div><div class="abs sep" style="left:1073px;top:947px;width:61px"></div><div class="abs sep" style="left:1136px;top:947px;width:162px"></div><div class="abs sep" style="left:1300px;top:947px;width:570px"></div><div class="abs tg on" style="left:1076px;top:957px"><u></u><s></s></div></div><div class="abs hd" style="letter-spacing:0.05px">Beeper-en konfigurazioa</div></div>
</div></div>
<div class="abs sbar" style="top:249px;height:711px"><div class="abs thumb" style="top:17px;height:349px"></div><svg class="abs" style="left:0;top:0" width="17" height="711" viewBox="0 0 17 711"><path d="M4.5,11.5 L8.5,6.5 L12.5,11.5Z" fill="#a3a3a3"/><path d="M4.5,700.5 L8.5,705.5 L12.5,700.5Z" fill="#505050"/></svg></div>
<div id="toolbar" class="abs"><div class="abs" style="left:1541px;top:10px;width:155px;height:30px;border-radius:3px;background:#ffbb00;border:1px solid #dba718;color:#000;font-size:12px;font-weight:bold;line-height:28px;text-align:center;white-space:nowrap;letter-spacing:.33px;text-shadow:0 1px 0 rgba(255,255,255,.25)">Gorde eta berrabiarazi</div></div>
<div id="status" class="abs"><div class="abs" style="left:10px;top:0;letter-spacing:.08px">Atakaren erabilera: D: 13 % U: 0 %</div><div class="abs" style="left:209px;top:0;width:1px;height:20px;background:#8d8c85"></div><div class="abs" style="left:220.5px;top:0;letter-spacing:0.2px">Pakete errorea: 0</div><div class="abs" style="left:326px;top:0;width:1px;height:20px;background:#8d8c85"></div><div class="abs" style="left:337px;top:0;letter-spacing:0.2px">I2C errorea: 0</div><div class="abs" style="left:422px;top:0;width:1px;height:20px;background:#8d8c85"></div><div class="abs" style="left:433.5px;top:0;letter-spacing:0.2px">Zikloaren denbora: 124</div><div class="abs" style="left:573px;top:0;width:1px;height:20px;background:#8d8c85"></div><div class="abs" style="left:584px;top:0;letter-spacing:-.25px">CPU Karga: 43 %</div><div class="abs" style="left:1313px;top:0;width:1px;height:20px;background:#8d8c85"></div><div class="abs" style="left:1324px;top:0;letter-spacing:-.11px">Konfiguratzailea: 10.10.0 (c97deaf) , Firmwarea: 4.5.2 BTFL , Target: BEFH/BETAFPVF405_ELRS(STM32F405)</div></div>
<div id="taskbar" class="abs"><div class="abs" style="left:0;top:0;width:1920px;height:1px;background:#3a3a3a"></div><svg class="abs" style="left:19px;top:10px" width="26" height="26" viewBox="0 0 26 26"><defs><linearGradient id="mg" x1="0" y1="0" x2="0" y2="1"><stop offset="0" stop-color="#fbd354"/><stop offset="1" stop-color="#f08a1c"/></linearGradient></defs><path d="M14.5,2 A11.5,11.5 0 1 1 1.5,17 A9.5,9.5 0 0 0 14.5,2Z" fill="url(#mg)"/></svg><div class="abs" style="left:51px;top:9px;font-size:12px;line-height:15px;color:#fff;white-space:nowrap;letter-spacing:-.3px">7°C</div><div class="abs" style="left:51px;top:25px;font-size:12px;line-height:15px;color:#d8d8d8;white-space:nowrap;letter-spacing:-.03px">Temps dégagé</div><svg class="abs" style="left:375px;top:13px" width="23" height="23" viewBox="0 0 23 23"><defs><linearGradient id="wg" x1="0" y1="0" x2="1" y2="1"><stop offset="0" stop-color="#6fd4ff"/><stop offset="1" stop-color="#1490e0"/></linearGradient></defs><g fill="url(#wg)"><rect x="0" y="0" width="11" height="11" rx=".6"/><rect x="12" y="0" width="11" height="11" rx=".6"/><rect x="0" y="12" width="11" height="11" rx=".6"/><rect x="12" y="12" width="11" height="11" rx=".6"/></g></svg><div class="abs" style="left:412px;top:9px;width:217px;height:30px;border-radius:15px;background:#f3f3f3"><svg class="abs" style="left:9px;top:7px" width="17" height="17" viewBox="0 0 17 17"><circle cx="7" cy="7" r="5.2" fill="none" stroke="#222" stroke-width="1.6"/><path d="M10.8,10.8 L15.5,15.5" stroke="#222" stroke-width="1.8"/></svg><div class="abs" style="left:36px;top:7px;font-size:13px;line-height:16px;color:#5a5a5a;white-space:nowrap;letter-spacing:.3px">Rechercher</div></div><svg class="abs" style="left:643px;top:12px" width="24" height="24" viewBox="0 0 24 24"><rect x="1.5" y="7" width="15" height="15" rx="1" fill="#5c5c5c"/><rect x="7.5" y="1.5" width="15.5" height="15.5" rx="1" fill="#e4e4e4"/><rect x="7.5" y="7" width="9" height="10" fill="#a9a9a9"/></svg><svg class="abs" style="left:686px;top:12px" width="24" height="24" viewBox="0 0 24 24"><path d="M8,6 V4.5 a4,3.2 0 0 1 8,0 V6" fill="none" stroke="#1a9fe8" stroke-width="1.8"/><rect x="1.5" y="6" width="21" height="17" rx="3" fill="#f3f3f3"/><rect x="7.2" y="9.6" width="4.2" height="4.2" fill="#f25022"/><rect x="12.6" y="9.6" width="4.2" height="4.2" fill="#7fba00"/><rect x="7.2" y="15" width="4.2" height="4.2" fill="#00a4ef"/><rect x="12.6" y="15" width="4.2" height="4.2" fill="#ffb900"/></svg><svg class="abs" style="left:731px;top:12px" width="24" height="24" viewBox="0 0 24 24"><path d="M1,4.5 a1.5,1.5 0 0 1 1.5,-1.5 h6 l2.5,2.5 h10.5 a1.5,1.5 0 0 1 1.5,1.5 v14 a1.5,1.5 0 0 1 -1.5,1.5 h-19 a1.5,1.5 0 0 1 -1.5,-1.5z" fill="#e9a825"/><path d="M1,8 h22 v13 a1.5,1.5 0 0 1 -1.5,1.5 h-19 a1.5,1.5 0 0 1 -1.5,-1.5z" fill="#ffd65c"/><rect x="6" y="16" width="12" height="6.5" rx="1.5" fill="#1d7fd6"/><rect x="8" y="18" width="8" height="2" rx="1" fill="#5db3f2"/></svg><div class="abs" style="left:740px;top:40px;width:6px;height:3px;border-radius:1.5px;background:#8a8a8a"></div><svg class="abs" style="left:775px;top:12px" width="24" height="24" viewBox="0 0 24 24"><circle cx="12" cy="12" r="11.5" fill="#fbc116"/><path d="M12,12 L2,6.3 A11.5,11.5 0 0 1 22,6.3Z" fill="#e33b2e"/><path d="M12,12 L2,6.3 A11.5,11.5 0 0 0 12.2,23.5 L17,15Z" fill="#269c47" transform="rotate(0 12 12)"/><path d="M2,6.3 A11.5,11.5 0 0 1 22,6.3 L12,6.3Z" fill="#e33b2e"/><circle cx="12" cy="12" r="5.6" fill="#fff"/><circle cx="12" cy="12" r="4.4" fill="#2f7de1"/></svg><svg class="abs" style="left:819px;top:12px" width="24" height="24" viewBox="0 0 24 24"><path d="M10.2,2.5 h3.6 l5.2,15.5 h-14z" fill="#f08a1d"/><path d="M8.9,7 h6.2 l1,3.2 h-8.2z M7,12.8 h10 l1,3.2 h-12z" fill="#f4f4f4"/><path d="M3.5,17.5 h17 l1.5,4.5 h-20z" fill="#ee7d12"/></svg><svg class="abs" style="left:863px;top:12px" width="24" height="24" viewBox="0 0 24 24"><path d="M3,1.5 h10 l4,4 v15 h-14z" fill="#e8e8e8"/><path d="M5,4h1v3h-1z M7.5,4h1.5v3h-1.5z M10,4h1v3h-1z M5,8.5h1.5v3h-1.5z M8,8.5h1v3h-1z M10.5,8.5h1.5v3h-1.5z M5,13h1v3h-1z M7.5,13h1.5v3h-1.5z M5,17.5h1.5v2h-1.5z" fill="#777"/><path d="M12,10 h5 a2.5,2.5 0 0 1 2.5,2.5 v2 h-6 a2.2,2.2 0 0 0 -2.2,2.2 h-1.3 v-4.2 a2.5,2.5 0 0 1 2,-2.5z" fill="#3774a8"/><path d="M20.5,23 h-5 a2.5,2.5 0 0 1 -2.5,-2.5 v-2 h6 a2.2,2.2 0 0 0 2.2,-2.2 h1.3 v4.2 a2.5,2.5 0 0 1 -2,2.5z" fill="#ffd342"/></svg><svg class="abs" style="left:906px;top:12px" width="24" height="24" viewBox="0 0 24 24"><path d="M4,9 L14,2 L23,8 V20 a2,2 0 0 1 -2,2 H6z" fill="#1a6fd0"/><path d="M6,10 L14,4.5 L21.5,9.5 L14,15z" fill="#5fc2f7"/><path d="M4,12 L14,17 L23,11 V20 a2,2 0 0 1 -2,2 H6 a2,2 0 0 1 -2,-2z" fill="#2b8fe9"/><rect x="1" y="11" width="10" height="10" rx="1.6" fill="#0f58b5"/><circle cx="6" cy="16" r="2.6" fill="none" stroke="#fff" stroke-width="1.5"/></svg><svg class="abs" style="left:950px;top:12px" width="24" height="24" viewBox="0 0 24 24"><path d="M12,1 L16,1.8 L18,1 L20.5,3.8 L20,5.5 L21.5,9 L19.5,16.5 C18.5,19.5 15,21.5 12,23.5 C9,21.5 5.5,19.5 4.5,16.5 L2.5,9 L4,5.5 L3.5,3.8 L6,1 L8,1.8Z" fill="#f1562b"/><path d="M12,5 L15.5,5.5 L17.5,9 L16,12 L17,14 L12,19 L7,14 L8,12 L6.5,9 L8.5,5.5Z" fill="#fff"/><path d="M12,8 L14,10 L12,16.5 L10,10Z M9,9.4 l1.4,.8 M15,9.4 l-1.4,.8" fill="#f1562b" stroke="#f1562b" stroke-width=".8"/></svg><div class="abs" style="left:959px;top:40px;width:6px;height:3px;border-radius:1.5px;background:#8a8a8a"></div><svg class="abs" style="left:995px;top:12px" width="24" height="24" viewBox="0 0 24 24"><circle cx="12" cy="12" r="11.5" fill="#58cc02"/><ellipse cx="7.8" cy="11" rx="3.6" ry="4.4" fill="#fff"/><ellipse cx="16.2" cy="11" rx="3.6" ry="4.4" fill="#fff"/><ellipse cx="8.4" cy="11.4" rx="1.3" ry="2" fill="#3c3c3c"/><ellipse cx="15.6" cy="11.4" rx="1.3" ry="2" fill="#3c3c3c"/><path d="M10.6,14.4 h2.8 l-1.4,2.4z" fill="#f7a928"/></svg><svg class="abs" style="left:1039px;top:12px" width="24" height="24" viewBox="0 0 24 24"><path d="M12,0.5 C13,6 21,9 21,15.5 A9,8.5 0 0 1 3,15.5 C3,10 10,7 12,0.5Z" fill="#2d7be5"/><path d="M12,0.5 C13,6 21,9 21,15.5 C16,16 11,12 9.5,7 C10.5,5 11.5,3 12,0.5Z" fill="#c24fd6"/><path d="M12,0.5 C13,5 18,7.5 20,11.5 C16,11 13,8 11.2,3.4Z" fill="#f0873b"/><path d="M3,15.5 C6,13 12,14 16,19 A9,8.5 0 0 1 3,15.5Z" fill="#4fb7f5"/></svg><svg class="abs" style="left:1083px;top:12px" width="24" height="24" viewBox="0 0 24 24"><circle cx="12.5" cy="12" r="10" fill="#f2c02e"/><circle cx="9" cy="8.6" r="1.8" fill="#fff"/><circle cx="15.4" cy="8.6" r="1.8" fill="#fff"/><circle cx="9.3" cy="8.9" r=".9" fill="#222"/><circle cx="15.1" cy="8.9" r=".9" fill="#222"/><path d="M6.5,13 C9,19.5 16,19.5 18.5,13Z" fill="#8a2c14"/><path d="M8.2,15.6 C10.5,18 14.5,18 16.8,15.6Z" fill="#e8584a"/><rect x="1" y="8" width="4" height="7" rx="1.6" fill="#2f7a7f"/><path d="M3,8 C3,2 20,0 21,7" fill="none" stroke="#555" stroke-width="1.2"/><path d="M3,15 C4,18 6,18.4 8,18" fill="none" stroke="#444" stroke-width="1"/></svg><svg class="abs" style="left:1127px;top:12px" width="24" height="24" viewBox="0 0 24 24"><g fill="none" stroke="#fff" stroke-width="1.7"><ellipse cx="12" cy="12" rx="4.4" ry="10.2"/><ellipse cx="12" cy="12" rx="4.4" ry="10.2" transform="rotate(60 12 12)"/><ellipse cx="12" cy="12" rx="4.4" ry="10.2" transform="rotate(120 12 12)"/></g></svg><div class="abs" style="left:1136px;top:40px;width:6px;height:3px;border-radius:1.5px;background:#8a8a8a"></div><svg class="abs" style="left:1171px;top:12px" width="24" height="24" viewBox="0 0 24 24"><circle cx="17.5" cy="12" r="6.5" fill="#111"/><circle cx="17.5" cy="12" r="2" fill="#999"/><path d="M1,3.5 L15,1 V23 L1,20.5Z" fill="#ee1111"/><circle cx="7.6" cy="12" r="3.8" fill="none" stroke="#fff" stroke-width="1.4"/><circle cx="7.6" cy="12" r="1.2" fill="#fff"/></svg><svg class="abs" style="left:1215px;top:12px" width="24" height="24" viewBox="0 0 24 24"><circle cx="15.5" cy="5.5" r="3.4" fill="#5b63d6"/><circle cx="21" cy="7" r="2.3" fill="#5b63d6"/><path d="M9,9.5 h10 v8 a5,5 0 0 1 -10,0z" fill="#5b63d6"/><path d="M18,10.5 h5.5 v6 a3.5,3.5 0 0 1 -5.5,2.8z" fill="#4b53c4"/><rect x="1" y="6.5" width="12" height="12" rx="1.5" fill="#3f47b5"/><path d="M4,9.6 h6 v1.8 h-2.1 v5.2 h-1.8 v-5.2 h-2.1z" fill="#fff"/></svg><svg class="abs" style="left:1259px;top:12px" width="24" height="24" viewBox="0 0 24 24"><circle cx="12" cy="12" r="10.8" fill="#1a1a1a" stroke="#e21b1b" stroke-width="1.6"/><path d="M10.6,5.5 h2.8 l.4,1.7 1.3,.6 1.5,-.9 1.9,1.9 -.9,1.5 .6,1.3 1.7,.4 v2.8 l-1.7,.4 -.6,1.3 .9,1.5 -1.9,1.9 -1.5,-.9 -1.3,.6 -.4,1.7 h-2.8 l-.4,-1.7 -1.3,-.6 -1.5,.9 -1.9,-1.9 .9,-1.5 -.6,-1.3 -1.7,-.4 v-2.8 l1.7,-.4 .6,-1.3 -.9,-1.5 1.9,-1.9 1.5,.9 1.3,-.6z" fill="#e21b1b" transform="translate(-1.2,0.6) scale(.92)"/><circle cx="9.9" cy="12.6" r="2.4" fill="#1a1a1a"/><path d="M14,14 L19,9 M19,9 h-3 M19,9 v3" stroke="#e21b1b" stroke-width="1.8" fill="none"/></svg><div class="abs" style="left:1268px;top:40px;width:6px;height:3px;border-radius:1.5px;background:#8a8a8a"></div><svg class="abs" style="left:1303px;top:12px" width="24" height="24" viewBox="0 0 24 24"><circle cx="12" cy="12" r="11.5" fill="#1b2d50"/><path d="M0.5,12 A11.5,11.5 0 0 0 23.5,12 C20,18 4,18 0.5,12Z" fill="#1f5e9c"/><circle cx="15.6" cy="9" r="3.6" fill="none" stroke="#fff" stroke-width="1.6"/><circle cx="15.6" cy="9" r="1.5" fill="#fff"/><path d="M0.8,11.5 L8.5,14.8 L12.5,10.5 L14.5,12.5 L10.5,16 A3,3 0 0 1 5.5,16.5 L0.8,14.6Z" fill="#fff"/></svg><svg class="abs" style="left:1347px;top:12px" width="24" height="24" viewBox="0 0 24 24"><circle cx="12" cy="12" r="11.5" fill="#6db33f"/><path d="M0.8,10 A11.5,11.5 0 0 1 23.2,10 C18,13 6,13 0.8,10Z" fill="#8ccb57"/><path d="M7.2,6 h3 v8 a2,2 0 0 0 4,0 v-8 h3 v11.6 h-2.6 v-1 a4,4 0 0 1 -4.4,.6 v4.3 h-3z" fill="#fff"/></svg><svg class="abs" style="left:1391px;top:12px" width="24" height="24" viewBox="0 0 24 24"><rect x="0" y="0" width="24" height="24" fill="#050510"/><circle cx="12" cy="12" r="9" fill="none" stroke="#6c6fd6" stroke-width="1.3"/><g fill="#7a7de0"><circle cx="12" cy="2.4" r="1.2"/><circle cx="12" cy="21.6" r="1.2"/><circle cx="2.4" cy="12" r="1.2"/><circle cx="21.6" cy="12" r="1.2"/><circle cx="5.2" cy="5.2" r="1"/><circle cx="18.8" cy="5.2" r="1"/><circle cx="5.2" cy="18.8" r="1"/><circle cx="18.8" cy="18.8" r="1"/></g><path d="M12,12 L17,7 M12,12 L7.5,9" stroke="#b9bbff" stroke-width="1.3"/></svg><svg class="abs" style="left:1435px;top:12px" width="24" height="24" viewBox="0 0 24 24"><circle cx="12" cy="12" r="11.5" fill="#5f9fd0"/><path d="M0.5,12 A11.5,11.5 0 0 0 23.5,12Z" fill="#6fb0a0"/><g fill="none" stroke="#fff" stroke-width="1"><path d="M9,5.5 a4,4 0 0 1 6,0 M10.2,7 a2.4,2.4 0 0 1 3.6,0"/><rect x="6" y="10.5" width="12" height="8" rx="1"/><path d="M4,11 h4 M16,11 h4 M8,13 l8,5 M16,13 l-8,5"/></g><circle cx="12" cy="8.4" r=".9" fill="#fff"/></svg><div class="abs" style="left:1444px;top:40px;width:6px;height:3px;border-radius:1.5px;background:#8a8a8a"></div><svg class="abs" style="left:1479px;top:12px" width="24" height="24" viewBox="0 0 24 24"><circle cx="12" cy="12" r="10.8" fill="#1a1a1a" stroke="#e21b1b" stroke-width="1.6"/><path d="M10.6,5.5 h2.8 l.4,1.7 1.3,.6 1.5,-.9 1.9,1.9 -.9,1.5 .6,1.3 1.7,.4 v2.8 l-1.7,.4 -.6,1.3 .9,1.5 -1.9,1.9 -1.5,-.9 -1.3,.6 -.4,1.7 h-2.8 l-.4,-1.7 -1.3,-.6 -1.5,.9 -1.9,-1.9 .9,-1.5 -.6,-1.3 -1.7,-.4 v-2.8 l1.7,-.4 .6,-1.3 -.9,-1.5 1.9,-1.9 1.5,.9 1.3,-.6z" fill="#e21b1b" transform="translate(-1.2,0.6) scale(.92)"/><circle cx="9.9" cy="12.6" r="2.4" fill="#1a1a1a"/><path d="M14,14 L19,9 M19,9 h-3 M19,9 v3" stroke="#e21b1b" stroke-width="1.8" fill="none"/></svg><div class="abs" style="left:1488px;top:40px;width:6px;height:3px;border-radius:1.5px;background:#8a8a8a"></div><div class="abs" style="left:1515px;top:4px;width:40px;height:40px;border-radius:4px;background:#2e2e2e;box-shadow:inset 0 0 0 1px #3a3a3a"></div><svg class="abs" style="left:1523px;top:12px" width="24" height="24" viewBox="0 0 24 24"><rect x="1" y="1" width="22" height="22" rx="1.5" fill="#1b1b1b"/><path d="M3.5,5.5 L13,11 L9.5,12.4 C6.5,12.4 5,9.5 3.5,5.5Z M12.4,10.4 C15.2,9 18.4,11.6 19,14.4 C17,13.6 15,13.8 13.8,13.6 C13.2,15 12,15.8 11,16 L10.6,12.2Z M11.4,15.6 C8.4,16.2 7.8,19.8 11.6,20.4 C15.2,20.8 18.2,18.8 19.8,16.6 C17.4,17.6 14.6,17 11.4,15.6Z" fill="#e5b10b"/></svg><div class="abs" style="left:1527.5px;top:40px;width:15px;height:3px;border-radius:1.5px;background:#7cc4ea"></div><svg class="abs" style="left:1680px;top:0" width="240" height="48" viewBox="1680 1032 240 48" fill="none" stroke="#fff" stroke-width="1.2"><path d="M1690,1058.5 L1695,1053.5 L1700,1058.5" stroke-width="1.4"/><rect x="1719.5" y="1050.5" width="15" height="10" rx="1.5"/><path d="M1722,1053.5h1M1724.5,1053.5h1M1727,1053.5h1M1729.5,1053.5h1M1732,1053.5h.5M1722,1055.5h1M1724.5,1055.5h1M1727,1055.5h1M1729.5,1055.5h1M1723.5,1058h7" stroke-width="1"/><rect x="1796.5" y="1050.5" width="11" height="9" rx="1"/><path d="M1799,1062.5h7M1802,1059.5v3"/><rect x="1806.5" y="1047.5" width="5" height="8" rx="1" fill="#1c1c1c"/><path d="M1808,1050h2"/><path d="M1819,1054.5 h2.5 l3.5,-3 v10 l-3.5,-3 h-2.5z"/><path d="M1827.5,1053.5 a4,4 0 0 1 0,5 M1830,1051.5 a7,7 0 0 1 0,9" stroke-width="1"/></svg><div class="abs" style="left:1745px;width:40px;top:9.5px;font-size:11.5px;line-height:16px;color:#fff;text-align:center;white-space:nowrap">FRA<br>FR</div><div class="abs" style="right:19px;top:8px;font-size:12px;line-height:16.5px;color:#fff;text-align:right;white-space:nowrap;letter-spacing:.05px"><span style="letter-spacing:-.2px">04:22</span><br>24-10-25</div></div>
</body>
</html>
